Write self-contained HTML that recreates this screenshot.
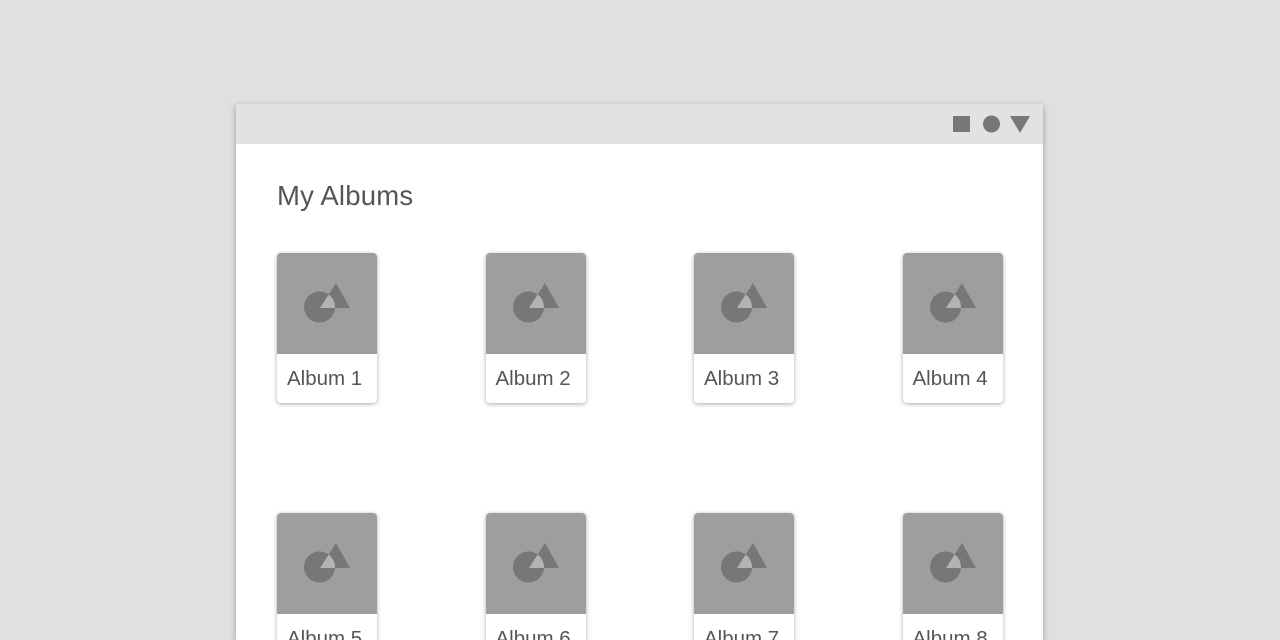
<!DOCTYPE html>
<html style="overflow:hidden;height:640px"><head><style>
body{margin:0;width:1280px;height:640px;background:#e0e0e0;overflow:hidden;font-family:"Liberation Sans",sans-serif;position:relative}
.win{position:absolute;left:236px;top:104px;width:807px;height:536px;background:#fff;box-shadow:0 2px 6px rgba(0,0,0,.3)}
.bar{height:40px;background:#e2e2e2;position:relative}
h1{position:absolute;left:41px;top:76px;margin:0;font-size:27.5px;font-weight:normal;color:#555;letter-spacing:0.2px}
.card{position:absolute;width:100px;height:150px;background:#fff;border-radius:4px;box-shadow:0 1px 4px rgba(0,0,0,.35);overflow:hidden}
.card svg{display:block}
.card span{position:absolute;left:10px;top:114px;font-size:20.5px;color:#555}
</style></head><body>
<div class="win">
<div class="bar">
<svg width="807" height="40" style="position:absolute;left:0;top:0">
<rect x="717" y="12" width="17" height="16" fill="#777"/>
<circle cx="755.5" cy="20" r="8.5" fill="#777"/>
<polygon points="774,12 794,12 784,29" fill="#777"/>
</svg>
</div>
<h1>My Albums</h1>
</div>
<div id="cards"></div>
<script>
var xs=[277,485.5,694,902.5],ys=[253,513],h='',n=1;
for(var r=0;r<2;r++)for(var c=0;c<4;c++){
h+='<div class="card" style="left:'+xs[c]+'px;top:'+ys[r]+'px"><svg width="100" height="101"><defs><clipPath id="cp'+n+'"><circle cx="42.5" cy="54" r="15.5"/></clipPath></defs><rect width="100" height="101" fill="#9e9e9e"/><circle cx="42.5" cy="54" r="15.5" fill="#777"/><polygon points="59,30 43,55 73,55" fill="#777"/><polygon points="59,30 43,55 73,55" fill="#b3b3b3" clip-path="url(#cp'+n+')"/></svg><span>Album '+n+'</span></div>';n++;}
document.getElementById('cards').innerHTML=h;
</script>
</body></html>
